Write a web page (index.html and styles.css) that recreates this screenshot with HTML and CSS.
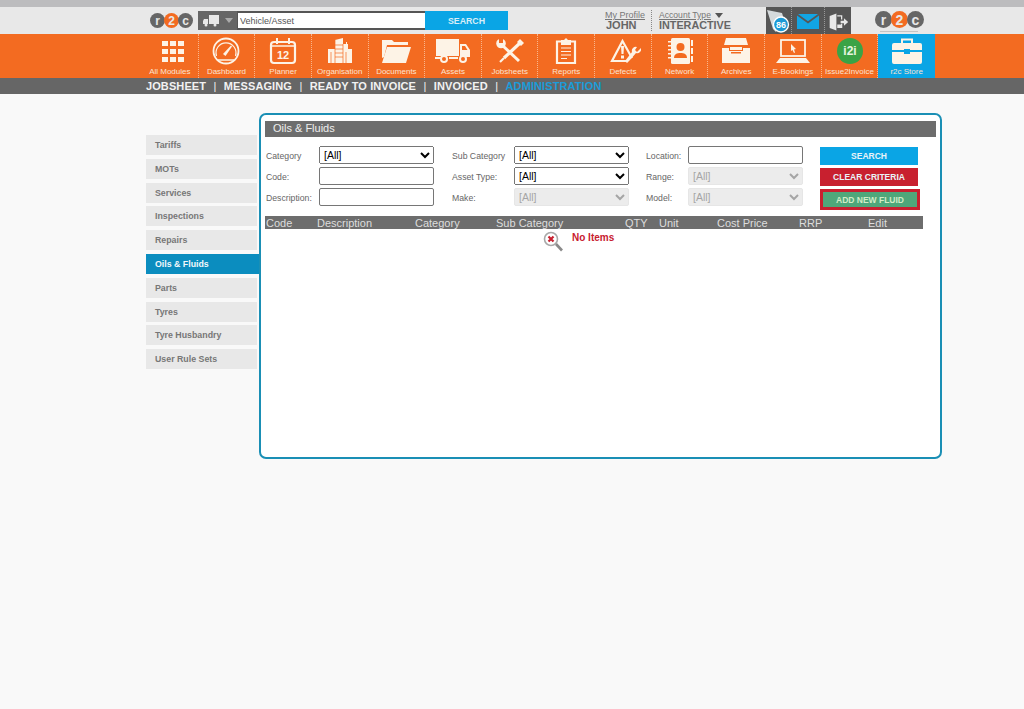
FILE: index.html
```html
<!DOCTYPE html>
<html lang="en">
<head>
	<meta charset="UTF-8">
	<title>Oils &amp; Fluids</title>
	<link rel="stylesheet" href="styles.css">
</head>
<body>

<div class="top-strip"></div>

<header class="header">
	<div class="logo logo-left"><span class="logo-grey">r</span><span class="logo-orange">2</span><span class="logo-grey">c</span></div>
	<div class="search-bar">
		<div class="asset-picker">
			<svg width="20" height="14" viewBox="0 0 20 14"><path fill="#e8e8e8" d="M7 1h10v9H7zM2 5h4v5H1V7z"/><circle cx="4" cy="11" r="1.500" fill="#e8e8e8"/><circle cx="13" cy="11" r="1.500" fill="#e8e8e8"/></svg>
			<span class="tri"></span>
		</div>
		<input class="search-input" value="Vehicle/Asset">
		<button class="search-go" type="button">SEARCH</button>
	</div>
	<div class="user-block">
		<a class="user-link">My Profile</a>
		<strong>JOHN</strong>
	</div>
	<div class="user-block account">
		<div class="account-line"><a class="user-link">Account Type</a> <span class="tri dark"></span></div>
		<strong>INTERACTIVE</strong>
	</div>
	<div class="quick-box">
		<div class="quick-item alerts">
			<svg width="25" height="25" viewBox="0 0 25 25"><path fill="#d5dadc" d="M1 1l15 3 3 10-5 3-4 6-3-3z"/><circle cx="15" cy="15.500" r="7.500" fill="#1c9ad6" stroke="#fff" stroke-width="1.300"/><text x="15" y="19" class="badge-num">86</text></svg>
		</div>
		<div class="quick-item mail">
			<svg width="22" height="15" viewBox="0 0 22 15"><path fill="#12a5e4" d="M0 1.500l11 8 11-8V15H0z"/><path fill="#12a5e4" d="M1 0h20l-10 7.300z"/></svg>
		</div>
		<div class="quick-item last">
			<svg width="21" height="22" viewBox="0 0 25 22"><path fill="#e8e8e8" d="M2 4l8-3v20l-8-3zM11 3h6v5h-1.500V4.500H11zM11 14h4.500v-1H17v5h-6z"/><path fill="#e8e8e8" d="M15 9.500h4V6.500l5 4.500-5 4.500v-3h-4z"/></svg>
		</div>
	</div>
	<div class="logo-right">
		<div class="logo logo-big"><span class="logo-grey">r</span><span class="logo-orange">2</span><span class="logo-grey">c</span></div>
		<div class="logo-tag"></div>
	</div>
</header>

<nav class="modules">
	<a class="module">
		<svg viewBox="0 0 36 28"><g class="ic"><path d="M10 4h6v5h-6zM18 4h6v5h-6zM26 4h6v5h-6zM10 12h6v5h-6zM18 12h6v5h-6zM26 12h6v5h-6zM10 20h6v5h-6zM18 20h6v5h-6zM26 20h6v5h-6z"/></g></svg>
		<span>All Modules</span>
	</a>
	<a class="module">
		<svg viewBox="0 0 36 28"><g class="ics"><circle cx="18" cy="14" r="12.500" stroke-width="1.800"/><path d="M8.500 19a10 10 0 1 1 19 0" stroke-width="1.200"/><path d="M10 23h16" stroke-width="1.500"/></g><g class="ic"><path d="M15 17l8-8.500 1 1-6.500 9.500z"/></g></svg>
		<span>Dashboard</span>
	</a>
	<a class="module">
		<svg viewBox="0 0 36 28"><g class="ics"><rect x="6" y="5" width="24" height="21" rx="3" stroke-width="2.200"/><path d="M12 1v6M24 1v6" stroke-width="2"/><path d="M6 9h24" stroke-width="1.500"/></g><text x="18" y="22" class="cal-num">12</text></svg>
		<span>Planner</span>
	</a>
	<a class="module">
		<svg viewBox="0 0 36 28"><g class="ic"><path d="M6 12h7v14H6zM13 3l8-2v25h-8zM21 7h3V5h1v2h1v5h4v14h-9z"/></g><g class="ics stripes"><path d="M13 8h8M13 12h8M13 16h8M13 20h8M24 15v11M9 15v11M13 3v23M21 7v19" stroke-width="0.700"/></g></svg>
		<span>Organisation</span>
	</a>
	<a class="module">
		<svg viewBox="0 0 36 28"><g class="ic"><path d="M4 3h10l2 2h14v3H9L6 20l-2 1z"/><path d="M9 10h24l-5 16H4z"/></g></svg>
		<span>Documents</span>
	</a>
	<a class="module">
		<svg viewBox="0 0 36 28"><g class="ic"><path d="M1 2h23v17H1zM25 7h6l4 6v7H25zM0 20h6v2H0zM14 20h9v2h-9z"/><circle cx="9" cy="22" r="4"/><circle cx="28" cy="22" r="4"/></g><g class="orange-dots"><circle cx="9" cy="22" r="2"/><circle cx="28" cy="22" r="2"/><path d="M27 9h3l2.500 4H27z"/></g></svg>
		<span>Assets</span>
	</a>
	<a class="module">
		<svg viewBox="0 0 36 28"><g class="ics"><path d="M10 8l17 16" stroke-width="3"/><path d="M28 6L12 21" stroke-width="3.200"/><path d="M12 21l-4 4" stroke-width="2.200"/></g><g class="ic"><circle cx="9" cy="6.500" r="4.800"/><path d="M28 2l4 4-3 3-4-4z"/></g><g class="orange-dots"><path d="M7 0h4v6H7z"/></g></svg>
		<span>Jobsheets</span>
	</a>
	<a class="module">
		<svg viewBox="0 0 36 28"><g class="ics"><path d="M13 4.500H9V26h18V4.500h-4" stroke-width="2.200"/><path d="M13 11h10M13 14.500h10M13 18h10M13 21.500h6" stroke-width="1.200"/></g><g class="ic"><path d="M13 3h3l2-2 2 2h3v5H13z"/></g></svg>
		<span>Reports</span>
	</a>
	<a class="module">
		<svg viewBox="0 0 36 28"><g class="ics"><path d="M23 24H7L17.500 4l9.500 17" stroke-width="2.200"/></g><g class="ic"><path d="M16 9h3l-.5 8h-2zM16 18.500h3v3h-3z"/><path d="M36 11a4 4 0 0 1-5 5l-6 7-3 3-2-2 7-9a4 4 0 0 1 5-5l-2 3 2 2z"/></g></svg>
		<span>Defects</span>
	</a>
	<a class="module">
		<svg viewBox="0 0 36 28"><g class="ic"><rect x="9" y="1" width="19" height="26" rx="1.500"/><path d="M29 3h2v6h-2zM29 11h2v6h-2zM29 19h2v6h-2zM6 4h4v1.500H6zM6 8h4v1.500H6zM6 12h4v1.500H6zM6 16h4v1.500H6zM6 20h4v1.500H6z"/></g><g class="orange-dots"><circle cx="18.500" cy="10" r="4"/><path d="M12 21c0-4 3-5 6.500-5s6.500 1 6.500 5z"/></g></svg>
		<span>Network</span>
	</a>
	<a class="module">
		<svg viewBox="0 0 36 28"><g class="ic"><path d="M8 1h20l2 7H6zM4 10h28v16H4z" /></g><g class="orange-dots"><path d="M4 10h8v3h12v-3h8v1H25v3H11v-3H4zM7 8h22v1H7z"/><path d="M13 15h10v1.500H13z"/></g></svg>
		<span>Archives</span>
	</a>
	<a class="module">
		<svg viewBox="0 0 36 28"><g class="ics"><rect x="6" y="3" width="24" height="16" stroke-width="1.800"/></g><g class="ic"><path d="M5 21h26l4 5H1z"/><path d="M16 7l5 5-2 .5 1 3-1 .5-1.500-3-1.500 1z"/></g></svg>
		<span>E-Bookings</span>
	</a>
	<a class="module">
		<svg viewBox="0 0 36 28"><circle cx="18" cy="14" r="13" fill="#3aa346"/><text x="18" y="18" class="i2i">i2i</text></svg>
		<span>Issue2Invoice</span>
	</a>
	<a class="module store">
		<svg viewBox="0 0 36 28"><g class="ics"><path d="M13 6V2.500h10V6" stroke-width="2"/></g><g class="ic"><path d="M5 6h26a2 2 0 0 1 2 2v5H21v-1h-6v1H3V8a2 2 0 0 1 2-2zM3 15h12v2h6v-2h12v10a2 2 0 0 1-2 2H5a2 2 0 0 1-2-2z"/></g></svg>
		<span>r2c Store</span>
	</a>
</nav>

<div class="subnav">
	<a>JOBSHEET</a><i>|</i>
	<a>MESSAGING</a><i>|</i>
	<a>READY TO INVOICE</a><i>|</i>
	<a>INVOICED</a><i>|</i>
	<a class="current">ADMINISTRATION</a>
</div>

<div class="content">
	<aside class="sidebar">
		<a class="tab">Tariffs</a>
		<a class="tab">MOTs</a>
		<a class="tab">Services</a>
		<a class="tab">Inspections</a>
		<a class="tab">Repairs</a>
		<a class="tab active">Oils &amp; Fluids</a>
		<a class="tab">Parts</a>
		<a class="tab">Tyres</a>
		<a class="tab">Tyre Husbandry</a>
		<a class="tab">User Rule Sets</a>
	</aside>

	<main class="panel">
		<h2 class="panel-title">Oils &amp; Fluids</h2>

		<form class="filters">
			<label>Category</label>
			<select><option>[All]</option></select>
			<label class="indent">Sub Category</label>
			<select><option>[All]</option></select>
			<label class="indent narrow">Location:</label>
			<input type="text">
			<button class="btn btn-search" type="button">SEARCH</button>

			<label>Code:</label>
			<input type="text">
			<label class="indent">Asset Type:</label>
			<select><option>[All]</option></select>
			<label class="indent narrow">Range:</label>
			<select disabled><option>[All]</option></select>
			<button class="btn btn-clear" type="button">CLEAR CRITERIA</button>

			<label>Description:</label>
			<input type="text">
			<label class="indent">Make:</label>
			<select disabled><option>[All]</option></select>
			<label class="indent narrow">Model:</label>
			<select disabled><option>[All]</option></select>
			<button class="btn btn-add" type="button">ADD NEW FLUID</button>
		</form>

		<table class="results">
			<colgroup>
				<col class="c-code"><col class="c-desc"><col class="c-cat"><col class="c-sub"><col class="c-qty">
				<col class="c-unit"><col class="c-cost"><col class="c-rrp"><col class="c-edit">
			</colgroup>
			<thead>
				<tr>
					<th>Code</th><th>Description</th><th>Category</th><th>Sub Category</th><th>QTY</th>
					<th>Unit</th><th>Cost Price</th><th>RRP</th><th>Edit</th>
				</tr>
			</thead>
		</table>

		<div class="no-items">
			<svg width="20" height="21" viewBox="0 0 20 21"><circle cx="8" cy="8" r="6.500" fill="#fff" stroke="#a9a9a9" stroke-width="1.600"/><path d="M13 13l6 6.500" stroke="#8a8a8a" stroke-width="2.600"/><path d="M5.500 5.500l5 5M10.500 5.500l-5 5" stroke="#c8202f" stroke-width="2.200"/></svg>
			<span>No Items</span>
		</div>
	</main>
</div>

</body>
</html>
```

FILE: styles.css
```css
* {
	box-sizing: border-box;
}
body {
	margin: 0;
	background: #f9f9f9;
	font-family: "Liberation Sans", Arial, sans-serif;
	color: #666;
}
.top-strip {
	height: 7px;
	background: #bcbcbe;
}
.header {
	display: flex;
	align-items: flex-start;
	height: 27px;
	padding-left: 150px;
	background: #e8e8e8;
}
.logo {
	display: flex;
	height: 15px;
}
.logo span {
	display: flex;
	align-items: center;
	justify-content: center;
	width: 15px;
	height: 15px;
	margin-right: -1px;
	border-radius: 50%;
	color: #e8e8e8;
	font-size: 12px;
	font-weight: bold;
	line-height: 1;
}
.logo-big {
	height: 17px;
}
.logo-big span {
	width: 17px;
	height: 17px;
	font-size: 14px;
}
.logo-grey {
	background: #666;
}
.logo-orange {
	background: #f36b21;
}
.logo-left {
	margin-top: 6px;
}
.search-bar {
	display: flex;
	height: 19px;
	margin: 4px 0 0 6px;
}
.asset-picker {
	display: flex;
	align-items: center;
	gap: 3px;
	width: 39px;
	padding-left: 4px;
	background: #666;
}
.tri {
	display: inline-block;
	width: 0;
	height: 0;
	border-left: 4px solid transparent;
	border-right: 4px solid transparent;
	border-top: 5px solid #aaa;
}
.tri.dark {
	border-top-color: #555;
	margin-left: 1px;
}
.search-input {
	width: 188px;
	height: 19px;
	padding: 0 2px;
	border: 2px solid #555;
	border-left-width: 1px;
	border-right: 0;
	background: #fff;
	color: #555;
	font: 9px "Liberation Sans", Arial, sans-serif;
}
.search-go {
	width: 83px;
	border: 0;
	background: #0aa5e5;
	color: #d8eef8;
	font: bold 8.800px "Liberation Sans", Arial, sans-serif;
}
.user-block {
	display: flex;
	flex-direction: column;
	align-items: flex-start;
	height: 21px;
	margin: 3px 0 0 97px;
	padding-right: 6px;
	border-right: 1px dotted #888;
}
.user-block strong {
	padding-left: 1px;
	font-size: 11px;
	line-height: 11px;
	color: #666;
}
.user-link {
	font-size: 9px;
	line-height: 10px;
	color: #777;
	text-decoration: underline;
}
.user-block.account {
	width: 107px;
	margin-left: 7px;
	padding: 0;
	border: 0;
}
.account .user-link {
	font-size: 8.600px;
}
.account strong {
	padding: 0;
	font-size: 10.800px;
}
.account-line {
	display: flex;
	align-items: center;
	gap: 3px;
	height: 10px;
}
.quick-box {
	display: flex;
	height: 27px;
	background: #565656;
}
.quick-item {
	display: flex;
	align-items: center;
	justify-content: center;
	height: 27px;
	padding-top: 2px;
	border-right: 1px dotted #999;
}
.quick-item.alerts {
	width: 26px;
}
.quick-item.mail {
	width: 33px;
}
.quick-item.last {
	width: 26px;
	border: 0;
}
.badge-num {
	fill: #fff;
	font-size: 9px;
	font-weight: bold;
	text-anchor: middle;
}
.logo-right {
	margin: 4px 0 0 24px;
}
.logo-tag {
	width: 38px;
	height: 1px;
	margin: 3px 0 0 5px;
	background: #c4c4c4;
}
.modules {
	display: flex;
	height: 44px;
	padding-left: 142px;
	background: #f36b21;
}
.module {
	display: flex;
	flex-direction: column;
	align-items: center;
	width: 56.650px;
	padding-top: 3px;
	border-right: 1px dotted #f9b68c;
	color: #fbe3d2;
	font-size: 8px;
	white-space: nowrap;
}
.module svg {
	width: 36px;
	height: 28px;
	flex: none;
}
.module span {
	margin-top: 1px;
	line-height: 11px;
}
.module.store {
	background: #0aa5e5;
	border-right: 0;
}
.ic path, .ic circle, .ic rect {
	fill: #fdf3e6;
}
.ics path, .ics rect, .ics circle {
	fill: none;
	stroke: #fdf3e6;
}
.ics.stripes path {
	stroke: #f36b21;
}
.orange-dots path, .orange-dots circle {
	fill: #f36b21;
}
.cal-num {
	fill: #fdf3e6;
	font-size: 11px;
	font-weight: bold;
	text-anchor: middle;
}
.i2i {
	fill: #e8f5e0;
	font-size: 12px;
	font-weight: bold;
	text-anchor: middle;
}
.subnav {
	display: flex;
	align-items: center;
	gap: 7.400px;
	height: 16px;
	padding-left: 146px;
	background: #666;
	color: #f2f2f2;
	font-size: 11px;
	font-weight: bold;
	letter-spacing: 0.100px;
	white-space: nowrap;
}
.subnav i {
	font-style: normal;
	font-weight: normal;
}
.subnav .current {
	color: #1a9cd8;
}
.content {
	display: flex;
	align-items: flex-start;
	padding: 19px 0 0 146px;
}
.sidebar {
	display: flex;
	flex-direction: column;
	gap: 3.800px;
	width: 113px;
	padding-top: 22px;
}
.tab {
	display: block;
	width: 111px;
	height: 20px;
	padding-left: 9px;
	background: #e8e8e8;
	color: #777;
	font-size: 8.800px;
	font-weight: bold;
	line-height: 20px;
}
.tab.active {
	width: 113px;
	background: #0b8dbf;
	color: #f2f8fb;
}
.panel {
	width: 683px;
	height: 346px;
	padding: 6px 4px;
	border: 2px solid #1a8fb5;
	border-radius: 7px;
	background: #fff;
}
.panel-title {
	height: 16px;
	margin: 0;
	padding-left: 8px;
	background: #6d6d6d;
	color: #eee;
	font-size: 11px;
	font-weight: normal;
	line-height: 15px;
}
.filters {
	display: grid;
	grid-template-columns: 54px 115px 80px 115px 59px 115px 117px;
	grid-auto-rows: 21px;
	align-items: start;
	margin: 9px 0 7px;
}
.filters label {
	padding: 5px 0 0 1px;
	font-size: 8.700px;
	white-space: nowrap;
}
.filters label.indent {
	padding-left: 18px;
}
.filters label.narrow {
	padding-left: 17px;
}
.filters input, .filters select {
	width: 115px;
	height: 18px;
	font: 10.500px "Liberation Sans", Arial, sans-serif;
}
.filters input {
	padding: 0 2px;
	border: 1px solid #767676;
	border-radius: 2px;
	background: #fff;
}
.filters select:disabled {
	border: 1px solid #e6e6e6;
	border-radius: 2px;
	background-color: #ececec;
	color: #a5a5a5;
	opacity: 1;
}
.btn {
	height: 18px;
	margin: 1px 0 0 17px;
	width: 98px;
	padding: 0;
	border: 0;
	color: #e8f3f8;
	font: bold 8.500px "Liberation Sans", Arial, sans-serif;
}
.btn-search {
	background: #0aa5e5;
}
.btn-clear {
	background: #c8202f;
}
.btn-add {
	width: 100px;
	height: 21px;
	border: 3px solid #c8202f;
	background: #4fa77a;
	color: #d3ecc7;
}
.results {
	width: 658px;
	border-collapse: collapse;
	table-layout: fixed;
}
.results th {
	height: 13px;
	padding: 1px 1px 0;
	background: #6d6d6d;
	color: #ddd;
	font-size: 11px;
	font-weight: normal;
	line-height: 12px;
	text-align: left;
	white-space: nowrap;
}
.c-code { width: 51px; }
.c-desc { width: 98px; }
.c-cat { width: 81px; }
.c-sub { width: 129px; }
.c-qty { width: 34px; }
.c-unit { width: 58px; }
.c-cost { width: 82px; }
.c-rrp { width: 69px; }
.c-edit { width: 56px; }
.no-items {
	display: flex;
	align-items: flex-start;
	gap: 9px;
	margin-top: 2px;
	padding-left: 278px;
}
.no-items span {
	color: #c8202f;
	font-size: 10px;
	font-weight: bold;
	line-height: 13px;
}
```
